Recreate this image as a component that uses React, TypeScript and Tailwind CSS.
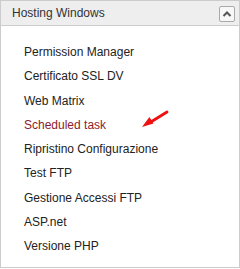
import React from "react";

const items = [
  "Permission Manager",
  "Certificato SSL DV",
  "Web Matrix",
  "Scheduled task",
  "Ripristino Configurazione",
  "Test FTP",
  "Gestione Accessi FTP",
  "ASP.net",
  "Versione PHP",
];

export default function App() {
  return (
    <div className="w-[240px] h-[269px] bg-white" style={{ fontFamily: "'Liberation Sans', Arial, sans-serif" }}>
      <div className="relative w-[240px] h-[268px] border border-[#cccccc] bg-white">
        <div className="flex items-center justify-between h-[25px] bg-[#eeeeee] border-b border-[#cccccc] pl-[11px] pr-[4px]">
          <span className="text-[12px] text-[#333333]">Hosting Windows</span>
          <button className="flex items-center justify-center w-[16px] h-[16px] mt-[1px] border border-[#aaaaaa] rounded-[2px] bg-[#f7f7f7]">
            <svg width="10" height="8" viewBox="0 0 10 8">
              <path d="M1.5 6 L5 2.5 L8.5 6" fill="none" stroke="#555555" strokeWidth="2" />
            </svg>
          </button>
        </div>
        <ul className="flex flex-col pt-[18px] pl-[23px] gap-[8.3px]">
          {items.map((t) => (
            <li
              key={t}
              className={`text-[12px] leading-[16px] ${t === "Scheduled task" ? "text-[#8b1c2c]" : "text-[#222222]"}`}
            >
              {t}
            </li>
          ))}
        </ul>
        <svg className="absolute left-[138px] top-[108px]" width="32" height="24" viewBox="0 0 32 24">
          <line x1="28" y1="3" x2="11" y2="13.5" stroke="#ee1111" strokeWidth="2.8" strokeLinecap="round" />
          <path d="M3 18 L14.5 14.6 L10.4 8 Z" fill="#ee1111" />
        </svg>
      </div>
    </div>
  );
}
